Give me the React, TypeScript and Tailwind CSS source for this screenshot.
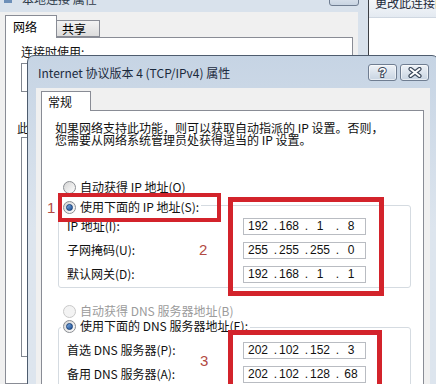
import { Fragment, type ReactNode } from "react";

// Windows 7 basic-theme dialogs: "本地连接 属性" behind, TCP/IPv4 dialog in front

function Radio({ checked, disabled }: { checked?: boolean; disabled?: boolean }) {
  return (
    <span
      className={`flex h-[13px] w-[13px] shrink-0 items-center justify-center rounded-full border ${
        disabled ? "border-[#c9c9c9] bg-[#f3f3f3]" : "border-[#8a8d92] bg-gradient-to-br from-[#d4d4d4] to-white"
      }`}
    >
      {checked && (
        <span className="h-[7px] w-[7px] rounded-full border border-[#163f78] bg-gradient-to-br from-[#7eaee6] to-[#1d4f92]" />
      )}
    </span>
  );
}

function RadioRow({
  label,
  checked,
  disabled,
  className = "",
}: {
  label: string;
  checked?: boolean;
  disabled?: boolean;
  className?: string;
}) {
  return (
    <div className={`flex h-[14px] items-center gap-[4px] ${className}`}>
      <Radio checked={checked} disabled={disabled} />
      <span className={`whitespace-nowrap leading-[14px] ${disabled ? "text-[#9b9b9b]" : "text-[#111]"}`}>{label}</span>
    </div>
  );
}

function IpBox({ parts }: { parts: string[] }) {
  return (
    <div className="flex h-[17px] w-[123px] items-center border border-[#b9bcc2] bg-white pl-[2px] font-['Liberation_Sans',sans-serif] text-[12px] leading-[14px] text-[#111]">
      {parts.map((p, i) => (
        <Fragment key={i}>
          {i > 0 && <span className="w-[7px] text-right">.</span>}
          <span className="w-[24px] text-center">{p}</span>
        </Fragment>
      ))}
    </div>
  );
}

function FieldRow({ label, parts }: { label: string; parts: string[] }) {
  return (
    <div className="flex h-[24px] items-center">
      <span className="w-[184px] whitespace-nowrap pl-[8px] leading-[14px] text-[#111]">{label}</span>
      <IpBox parts={parts} />
    </div>
  );
}

function CaptionButton({ children }: { children: ReactNode }) {
  return (
    <div className="flex h-[17px] w-[29px] items-center justify-center rounded-[3px] border border-[#6f7d91] bg-gradient-to-b from-[#eef2f7] to-[#c8d4e2] shadow-[inset_0_0_0_1px_rgba(255,255,255,0.55)]">
      {children}
    </div>
  );
}

function BackWindow() {
  return (
    <div className="absolute left-0 top-0 flex h-full w-[368px] flex-col bg-[#d9e2ec]">
      <div className="flex h-[12px] items-start">
        <span className="ml-[4px] h-[3px] w-[8px] bg-[#6d8fb8]" />
        <span className="-mt-[8px] ml-[10px] whitespace-nowrap text-[12px] leading-[14px] text-[#2f3b4a]">本地连接 属性</span>
        <span className="-mt-[11px] ml-auto mr-[9px] h-[17px] w-[30px] rounded-[3px] border border-[#6f7d91] bg-gradient-to-b from-[#eef2f7] to-[#c8d4e2]" />
      </div>
      <div className="flex w-[358px] flex-1 flex-col bg-[#f0f0f0] pl-[5px] pt-[3px]">
        <div className="flex items-end">
          <div className="relative z-10 -mb-px flex h-[23px] w-[52px] items-center border border-b-0 border-[#898c95] bg-white pl-[7px] text-[12px]">
            网络
          </div>
          <div className="flex h-[17px] w-[43px] items-center border border-l-0 border-[#898c95] bg-gradient-to-b from-[#f3f3f3] to-[#dcdcdc] pl-[5px] text-[12px]">
            共享
          </div>
        </div>
        <div className="flex w-[348px] flex-1 flex-col border border-[#898c95] bg-white pt-[7px]">
          <span className="pl-[15px] leading-[14px] text-[#111]">连接时使用:</span>
          <div className="ml-[15px] mt-[4px] h-[29px] w-[300px] border border-[#828790] bg-white" />
          <span className="mt-[29px] pl-[11px] leading-[14px] text-[#111]">此连接使用下列项目(O):</span>
          <div className="ml-[15px] mt-[2px] h-[220px] w-[300px] border border-[#828790] bg-white" />
        </div>
      </div>
    </div>
  );
}

function SideWindow() {
  return (
    <div className="absolute left-[368px] top-0 h-[60px] w-[68px] border-l border-[#3c3f44] bg-white">
      <div className="h-[18px] overflow-hidden border-b border-[#cfd7e1] bg-gradient-to-b from-[#f5f7fa] to-[#e4eaf1] pl-[6px]">
        <span className="-mt-[4px] block whitespace-nowrap text-[12px] leading-[14px] text-[#1e2a3a]">更改此连接的设置</span>
      </div>
    </div>
  );
}

function IpDialog() {
  return (
    <div className="absolute left-[27px] top-[55px] flex h-[345px] w-[412px] flex-col rounded-t-[7px] border border-[#4e5c6e] bg-gradient-to-b from-[#c6d4e4] via-[#dde5ee] to-[#dde5ee] px-[8px]">
      <div className="flex h-[32px] shrink-0 items-start">
        <span className="ml-[2px] mt-[9px] whitespace-nowrap text-[12px] leading-[16px] text-[#1b2a3d]">
          Internet 协议版本 4 (TCP/IPv4) 属性
        </span>
        <div className="ml-auto mr-[1px] mt-[8px] flex gap-[3px]">
          <CaptionButton>
            <span className="font-['Liberation_Sans',sans-serif] text-[13px] font-bold leading-[13px] text-white [-webkit-text-stroke:2px_#3d4a5c] [paint-order:stroke_fill]">
              ?
            </span>
          </CaptionButton>
          <CaptionButton>
            <svg width="14" height="11" viewBox="0 0 14 11">
              <path d="M2.5 2 L11.5 9 M11.5 2 L2.5 9" stroke="#3d4a5c" strokeWidth="4.2" strokeLinecap="round" />
              <path d="M2.5 2 L11.5 9 M11.5 2 L2.5 9" stroke="#fff" strokeWidth="2" strokeLinecap="round" />
            </svg>
          </CaptionButton>
        </div>
      </div>

      <div className="flex flex-1 flex-col bg-[#f0f0f0] pl-[5px] pr-[6px] pt-[3px]">
        <div className="relative z-10 -mb-px flex h-[20px] w-[50px] items-center border border-b-0 border-[#898c95] bg-white pl-[6px] text-[12px] leading-[14px] text-[#111]">
          常规
        </div>

        <div className="relative flex-1 border border-[#898c95] bg-white pl-[13px] pt-[11px] text-[12px]">
          <p className="whitespace-nowrap leading-[12px] text-[#111]">
            如果网络支持此功能，则可以获取自动指派的 IP 设置。否则，
            <br />
            您需要从网络系统管理员处获得适当的 IP 设置。
          </p>

          <RadioRow className="ml-[8px] mt-[34px]" label="自动获得 IP 地址(O)" />

          <div className="ml-[3px] mt-[11px] w-[353px] rounded-[3px] border border-[#d5dbe1] pb-[1px]">
            <div className="-mt-[6px] ml-[2px] w-fit bg-white px-[2px]">
              <RadioRow checked label="使用下面的 IP 地址(S):" />
            </div>
            <FieldRow label="IP 地址(I):" parts={["192", "168", "1", "8"]} />
            <FieldRow label="子网掩码(U):" parts={["255", "255", "255", "0"]} />
            <FieldRow label="默认网关(D):" parts={["192", "168", "1", "1"]} />
          </div>

          <RadioRow className="ml-[8px] mt-[16px]" disabled label="自动获得 DNS 服务器地址(B)" />

          <div className="ml-[3px] mt-[9px] w-[353px] rounded-[3px] border border-[#d5dbe1] pb-[1px]">
            <div className="-mt-[9px] ml-[2px] w-fit bg-white px-[2px]">
              <RadioRow checked label="使用下面的 DNS 服务器地址(E):" />
            </div>
            <div className="mt-[5px]">
              <FieldRow label="首选 DNS 服务器(P):" parts={["202", "102", "152", "3"]} />
              <FieldRow label="备用 DNS 服务器(A):" parts={["202", "102", "128", "68"]} />
            </div>
          </div>

          {/* red annotation boxes and step numbers */}
          <div className="absolute left-[16px] top-[82px] h-[29px] w-[163px] border-[4px] border-[#d3232b]" />
          <div className="absolute left-[186px] top-[86px] h-[99px] w-[156px] border-[5px] border-[#d3232b]" />
          <div className="absolute left-[186px] top-[219px] h-[120px] w-[154px] border-[5px] border-[#d3232b]" />
          <span className="absolute left-[5px] top-[89px] font-['Liberation_Sans',sans-serif] text-[15px] leading-[15px] text-[#b24a43]">1</span>
          <span className="absolute left-[157px] top-[131px] font-['Liberation_Sans',sans-serif] text-[15px] leading-[15px] text-[#b24a43]">2</span>
          <span className="absolute left-[158px] top-[242px] font-['Liberation_Sans',sans-serif] text-[15px] leading-[15px] text-[#b24a43]">3</span>
        </div>
      </div>
    </div>
  );
}

export default function App() {
  return (
    <div className="relative h-[384px] w-[436px] overflow-hidden bg-[#f0f0f0] font-['Noto_Sans_CJK_SC',sans-serif] text-[12px]">
      <BackWindow />
      <SideWindow />
      <IpDialog />
    </div>
  );
}
